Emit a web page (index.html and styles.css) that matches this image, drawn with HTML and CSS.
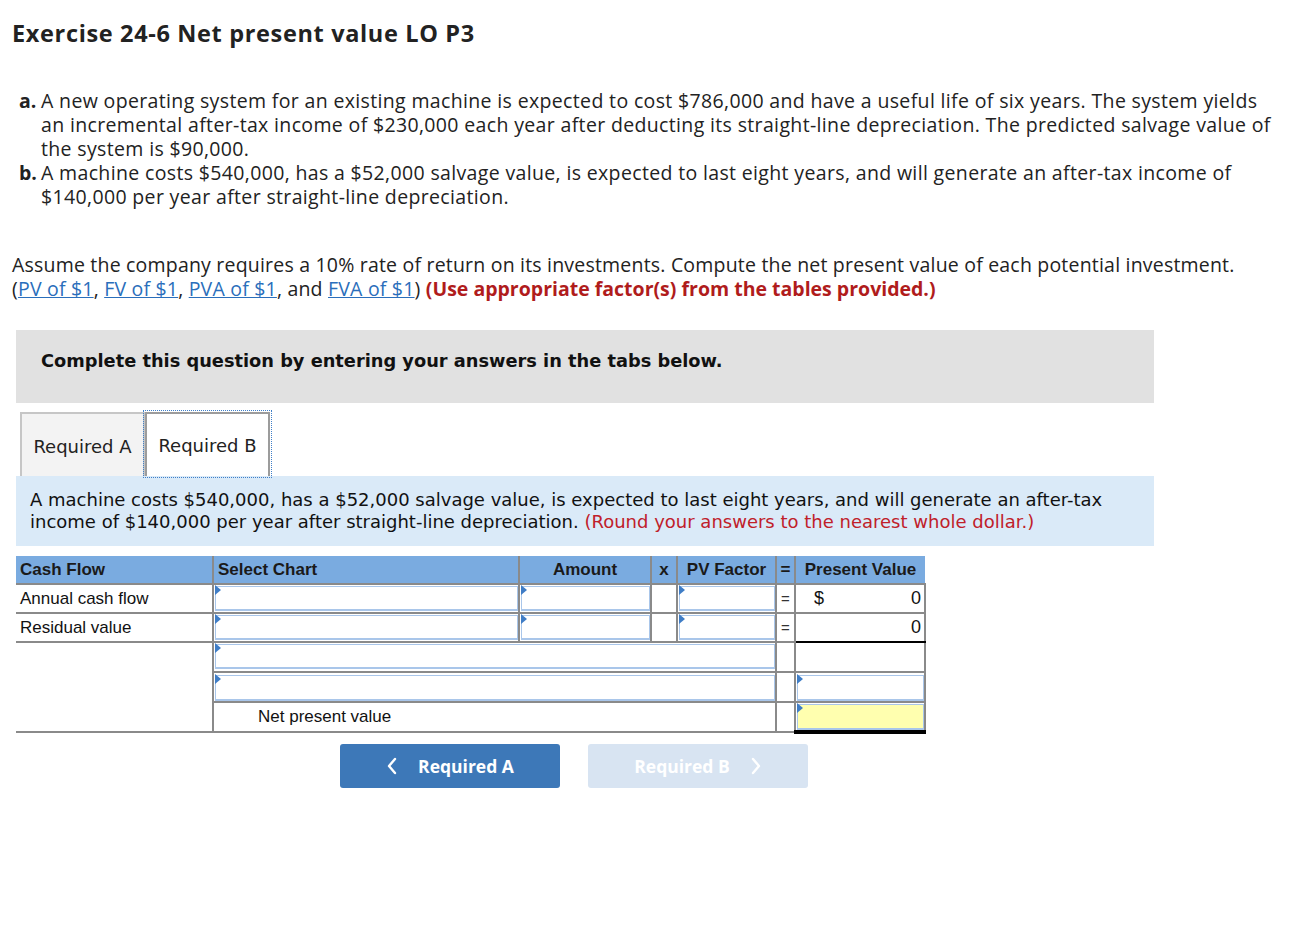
FILE: index.html
```html
<!DOCTYPE html>
<html>
<head>
<meta charset="utf-8">
<link rel="stylesheet" href="styles.css">
</head>
<body>
<div class="page">
  <h1 class="title">Exercise 24-6 Net present value LO P3</h1>
  <div class="items">
    <div class="item"><span class="lbl">a.</span><span class="itxt">A new operating system for an existing machine is expected to cost $786,000 and have a useful life of six years. The system yields an incremental after-tax income of $230,000 each year after deducting its straight-line depreciation. The predicted salvage value of the system is $90,000.</span></div>
    <div class="item"><span class="lbl">b.</span><span class="itxt">A machine costs $540,000, has a $52,000 salvage value, is expected to last eight years, and will generate an after-tax income of $140,000 per year after straight-line depreciation.</span></div>
  </div>
  <p class="assume">Assume the company requires a 10% rate of return on its investments. Compute the net present value of each potential investment. (<a class="lnk">PV of $1</a>, <a class="lnk">FV of $1</a>, <a class="lnk">PVA of $1</a>, and <a class="lnk">FVA of $1</a>) <span class="red">(Use appropriate factor(s) from the tables provided.)</span></p>

  <div class="graybox">Complete this question by entering your answers in the tabs below.</div>

  <div class="tabs">
    <div class="tab tab-a">Required A</div>
    <div class="tab tab-b">Required B</div>
  </div>
  <div class="bluebox">A machine costs $540,000, has a $52,000 salvage value, is expected to last eight years, and will generate an after-tax income of $140,000 per year after straight-line depreciation. <span class="red2">(Round your answers to the nearest whole dollar.)</span></div>

  <table class="grid">
    <colgroup>
      <col class="c1"><col class="c2"><col class="c3"><col class="c4"><col class="c5"><col class="c6"><col class="c7">
    </colgroup>
    <thead>
      <tr>
        <th class="left">Cash Flow</th>
        <th class="left">Select Chart</th>
        <th>Amount</th>
        <th>x</th>
        <th>PV Factor</th>
        <th class="eq">=</th>
        <th>Present Value</th>
      </tr>
    </thead>
    <tbody>
      <tr class="r1">
        <td class="lab">Annual cash flow</td>
        <td class="inp"><div class="fld"></div></td>
        <td class="inp"><div class="fld"></div></td>
        <td></td>
        <td class="inp"><div class="fld"></div></td>
        <td class="eqc">=</td>
        <td class="pv"><span>$</span><span>0</span></td>
      </tr>
      <tr class="r2">
        <td class="lab">Residual value</td>
        <td class="inp"><div class="fld"></div></td>
        <td class="inp"><div class="fld"></div></td>
        <td></td>
        <td class="inp"><div class="fld"></div></td>
        <td class="eqc">=</td>
        <td class="pv sum"><span></span><span>0</span></td>
      </tr>
      <tr class="r3">
        <td rowspan="3" class="blank"></td>
        <td colspan="4" class="inp"><div class="fld"></div></td>
        <td></td>
        <td></td>
      </tr>
      <tr class="r4">
        <td colspan="4" class="inp"><div class="fld"></div></td>
        <td></td>
        <td class="inp"><div class="fld"></div></td>
      </tr>
      <tr class="r5">
        <td colspan="4" class="npv">Net present value</td>
        <td></td>
        <td class="inp total"><div class="fld yellow"></div></td>
      </tr>
    </tbody>
  </table>

  <div class="nav">
    <button class="btn prev"><svg width="12" height="18" viewBox="0 0 12 18"><path d="M9 2 L3 9 L9 16" fill="none" stroke="#fff" stroke-width="2.4" stroke-linecap="round" stroke-linejoin="round"/></svg><span>Required A</span></button>
    <button class="btn next"><span>Required B</span><svg width="12" height="18" viewBox="0 0 12 18"><path d="M3 2 L9 9 L3 16" fill="none" stroke="#fff" stroke-width="2.4" stroke-linecap="round" stroke-linejoin="round"/></svg></button>
  </div>
</div>
</body>
</html>
```

FILE: styles.css
```css
* { box-sizing: border-box; }
html, body { margin: 0; padding: 0; background: #fff; }
.page {
  padding: 0 0 0 12px;
  font-family: "Open Sans", Lato, sans-serif;
  color: #222;
}
.title {
  margin: 20px 0 0 0;
  font-size: 23.5px;
  line-height: 26px;
  font-weight: 700;
  letter-spacing: 0.65px;
  color: #222;
}
.items {
  margin-top: 43px;
  font-size: 19.5px;
  letter-spacing: 0.35px;
  line-height: 24px;
}
.item {
  display: flex;
  padding-left: 7px;
}
.lbl { font-weight: 700; width: 22px; flex: none; letter-spacing: 0; }
.itxt { flex: 1; padding-right: 35px; }
.assume {
  margin: 44px 0 0 0;
  font-size: 19.5px;
  letter-spacing: 0.2px;
  line-height: 24px;
  padding-right: 40px;
}
.lnk { color: #2a6ebb; text-decoration: underline; }
.red { color: #b01c1c; font-weight: 700; letter-spacing: 0; }

.graybox {
  margin: 29px 0 0 4px;
  width: 1138px;
  height: 73px;
  background: #e1e1e1;
  padding: 20px 0 0 25px;
  font-family: "DejaVu Sans", Verdana, sans-serif;
  font-weight: 700;
  font-size: 17.8px;
  line-height: 22px;
  color: #111;
}
.tabs {
  display: flex;
  align-items: flex-end;
  margin: 7px 0 0 8px;
  height: 66px;
}
.tab {
  font-family: "DejaVu Sans", Verdana, sans-serif;
  font-size: 18px;
  color: #222;
  display: flex;
  align-items: center;
  justify-content: center;
}
.tab-a {
  width: 125px;
  height: 64px;
  background: #f3f3f3;
  border: 2px solid #c6c6c6;
  border-bottom: none;
  padding-top: 2px;
}
.tab-b {
  width: 125px;
  height: 64px;
  background: #fff;
  border: 2px solid #9c9c9c;
  border-bottom: none;
  outline: 1px dotted #3f7fc8;
  outline-offset: 1px;
}
.bluebox {
  margin-left: 4px;
  width: 1138px;
  background: #daeaf8;
  padding: 13px 24px 13px 14px;
  font-family: "DejaVu Sans", Verdana, sans-serif;
  font-size: 18px;
  line-height: 22px;
  color: #111;
}
.red2 { color: #c0202a; }

.grid {
  margin: 10px 0 0 4px;
  border-collapse: collapse;
  table-layout: fixed;
  width: 909px;
  font-family: "Liberation Sans", Arial, sans-serif;
  font-size: 18px;
  color: #111;
}
.c1 { width: 197px; }
.c2 { width: 306px; }
.c3 { width: 132px; }
.c4 { width: 26px; }
.c5 { width: 99px; }
.c6 { width: 19px; }
.c7 { width: 130px; }
.grid th, .grid td { box-sizing: content-box; }
.grid th {
  background: #7aabe0;
  height: 27px;
  padding: 0 3px;
  font-weight: 700;
  font-size: 17px;
  text-align: center;
  border-left: 2px solid #8a8a8a;
  border-bottom: 2px solid #8a8a8a;
  white-space: nowrap;
  color: #1a1a1a;
}
.grid th:first-child { border-left: none; }
.grid th.left { text-align: left; padding-left: 4px; }
.grid th.eq { padding: 0; }
.grid td {
  padding: 0;
  border-left: 2px solid #8a8a8a;
  border-right: 2px solid #8a8a8a;
  border-bottom: 2px solid #8a8a8a;
}
.grid .r1 td, .grid .r2 td { height: 26px; }
.grid .r3 td { height: 27px; }
.grid .r4 td { height: 27px; }
.grid .r5 td { height: 26px; }
.grid tbody tr td:first-child { border-left: none; }
.grid td.lab { padding-left: 4px; border-left: none; font-size: 17px; }
.grid td.blank { border-left: none; }
.grid td.inp { padding: 1px 0 0 0; vertical-align: top; }
.fld {
  position: relative;
  height: 25px;
  background: #fff;
  border: 1px solid #a9c6ea;
  border-bottom: 2px solid #a9c6ea;
  margin-left: 1px;
}
.r4 .fld { height: 26px; margin-top: 1px; }
.fld::before {
  content: "";
  position: absolute;
  left: -1px;
  top: 0;
  border-top: 5px solid transparent;
  border-bottom: 5px solid transparent;
  border-left: 6px solid #3f7dc6;
  transform: translateY(-2px);
}
.fld.yellow { background: #ffffaf; height: 26px; }
.grid td.eqc { text-align: center; font-size: 15px; color: #333; }
.grid td.pv {
  padding: 0 3px 0 18px;
}
.grid td.pv span:first-child { float: left; }
.grid td.pv span:last-child { float: right; }
.grid td.sum { border-bottom: 2px solid #000; }
.grid td.total { border-bottom: 4px solid #000; }
.grid td.npv { padding-left: 44px; font-size: 17px; }

.nav {
  display: flex;
  gap: 28px;
  margin: 10px 0 0 328px;
}
.btn {
  width: 220px;
  height: 44px;
  border: none;
  border-radius: 3px;
  display: flex;
  align-items: center;
  justify-content: center;
  gap: 20px;
  font-family: "Open Sans", Lato, sans-serif;
  font-weight: 700;
  font-size: 17.5px;
  color: #fff;
  padding: 0;
}
.prev { background: #3d78b8; }
.next { background: #d8e4f2; }
```
